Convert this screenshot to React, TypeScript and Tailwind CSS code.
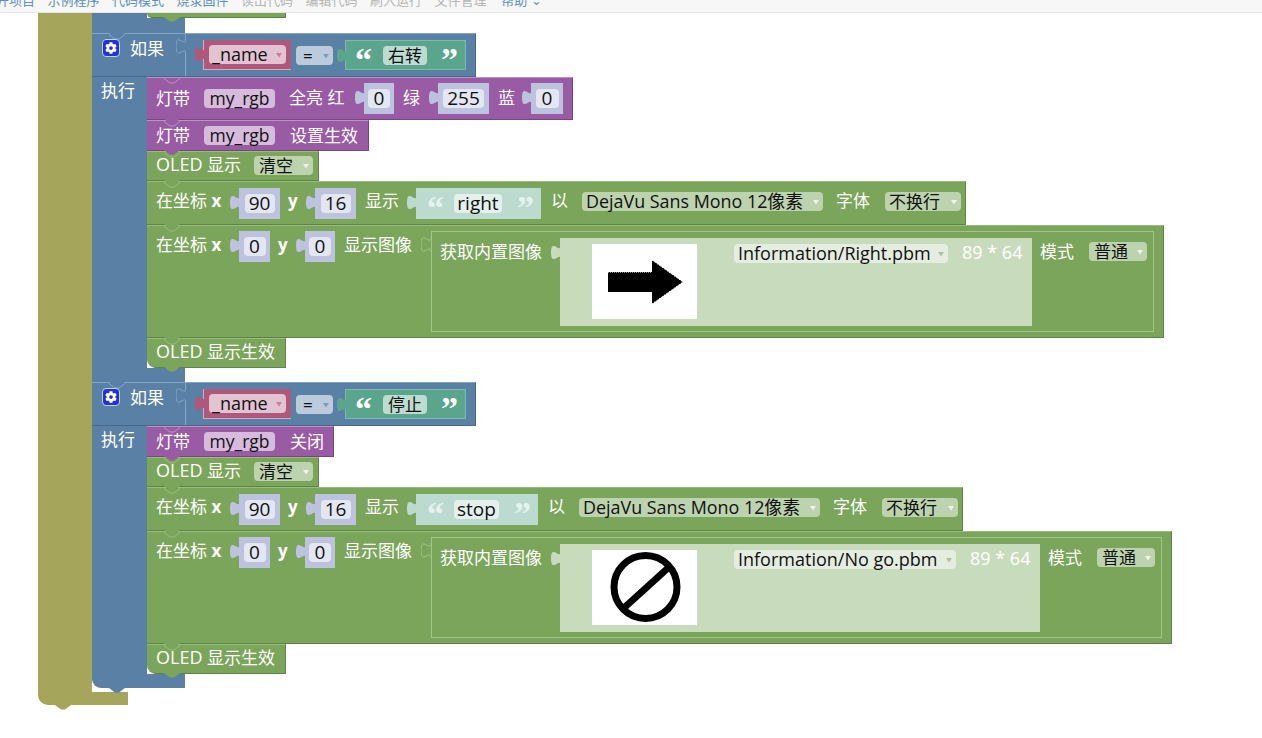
import React from "react";
import { FaCog } from "react-icons/fa";

const T = "shrink-0 whitespace-nowrap text-[17px] leading-[20px] text-white";
const GREEN = "relative flex shrink-0 border-t border-r border-b border-t-[#97bd7c] border-r-[#5f8346] border-b-[#5f8346] bg-[#7aa55b] pl-[9px]";
const PURPLE = "relative flex shrink-0 items-center border-t border-r border-b border-t-[#bd93c6] border-r-[#77467f] border-b-[#77467f] bg-[#9a5ba5] pl-[9px]";
const GP = "bg-[#bdd2ae]";
const PP = "bg-[#d7bbdc]";

function Puzzle({ fill, stroke = "none", className = "-left-[9px] top-[5px]" }: { fill: string; stroke?: string; className?: string }) {
  return (
    <svg className={"absolute " + className} width="10" height="20" viewBox="0 0 10 20">
      <path d="M10 2c0 10-10-8-10 7.500s10-2.500 10 7.500" fill={fill} stroke={stroke} />
    </svg>
  );
}

function Tab({ fill, z = "z-10" }: { fill: string; z?: string }) {
  return (
    <svg className={"absolute left-[17px] -bottom-[5px] " + z} width="16" height="5" viewBox="0 0 16 5">
      <path d="M0 0h16l-6 4.500h-4z" fill={fill} />
    </svg>
  );
}

function Chevron({ stroke }: { stroke: string }) {
  return (
    <svg className="absolute left-[17px] top-0" width="16" height="6" viewBox="0 0 16 6">
      <path d="M0 .5l6 4.500h4l6-4.500" fill="none" stroke={stroke} />
    </svg>
  );
}

function Pill({ className, arrow, children }: { className: string; arrow?: string; children: React.ReactNode }) {
  return (
    <div className={"flex h-[19px] shrink-0 items-center whitespace-nowrap rounded-[4px] leading-[19px] text-[#111] " + (arrow ? "justify-between pr-[4px] " : "justify-center ") + className}>
      <span>{children}</span>
      {arrow && (
        <svg className="mt-[2px] shrink-0" width="6" height="5" viewBox="0 0 6 5">
          <path d="M0 0h6l-3 4.500z" fill={arrow} />
        </svg>
      )}
    </div>
  );
}

function Num({ className, pill, children }: { className: string; pill: string; children: React.ReactNode }) {
  return (
    <div className={"relative flex h-[31px] shrink-0 items-center justify-center bg-[#bdc2de] " + className}>
      <Puzzle fill="#bdc2de" />
      <Pill className={"bg-[#e4e6f2] text-[19px] " + pill}>{children}</Pill>
    </div>
  );
}

function Quote({ className, char }: { className: string; char: string }) {
  return (
    <span className={"h-[20px] shrink-0 overflow-visible whitespace-nowrap font-['Liberation_Serif',serif] text-[34px] font-bold leading-[30px] " + className}>
      {char}
    </span>
  );
}

function Lamp({ className, children }: { className: string; children?: React.ReactNode }) {
  return (
    <div className={PURPLE + " " + className}>
      <Chevron stroke="#bd93c6" />
      <span className={T}>灯带</span>
      <Pill className={"ml-[14px] w-[71px] text-[17.500px] " + PP}>my_rgb</Pill>
      {children}
      <Tab fill="#9a5ba5" />
    </div>
  );
}

function OledWord() {
  return <span className="inline-block w-[51px] text-[18px]">OLED</span>;
}

function OledClear() {
  return (
    <div className={GREEN + " h-[30px] w-[172px] items-center"}>
      <Chevron stroke="#97bd7c" />
      <span className={T + " -mt-[3px]"}><OledWord />显示</span>
      <Pill className={"-mt-[2px] ml-[13px] w-[59px] pl-[5px] text-[17px] " + GP} arrow="#eef4ea">清空</Pill>
      <Tab fill="#7aa55b" />
    </div>
  );
}

function OledDone() {
  return (
    <div className={GREEN + " h-[30px] w-[139px] items-center rounded-bl-[9px]"}>
      <Chevron stroke="#97bd7c" />
      <span className={T + " -mt-[3px]"}><OledWord />显示生效</span>
      <Tab fill="#7aa55b" />
    </div>
  );
}

function Coord() {
  return (
    <>在坐标 <span className="font-bold">x</span></>
  );
}

function ShowText({ word, block, pill, row }: { word: string; block: string; pill: string; row: string }) {
  return (
    <div className={GREEN + " h-[44px] items-center " + row}>
      <Chevron stroke="#97bd7c" />
      <span className={T + " -mt-[4px] w-[66px]"}><Coord /></span>
      <Num className="ml-[17px] w-[41px]" pill="w-[30px]">90</Num>
      <span className={T + " -mt-[4px] ml-[8px] w-[10px] font-bold"}>y</span>
      <Num className="ml-[17px] w-[41px]" pill="w-[30px]">16</Num>
      <span className={T + " -mt-[4px] ml-[9px] w-[34px]"}>显示</span>
      <div className={"relative ml-[17px] flex h-[31px] shrink-0 items-center bg-[#bddad1] pl-[11px] " + block}>
        <Puzzle fill="#bddad1" />
        <Quote className="w-[14px] text-[#e6f2ee]" char="“" />
        <Pill className={"ml-[13px] bg-[#e3f0ec] text-[19px] " + pill}>{word}</Pill>
        <Quote className="ml-[15px] w-[14px] text-[#e6f2ee]" char="”" />
      </div>
      <span className={T + " -mt-[4px] ml-[10px] w-[17px]"}>以</span>
      <Pill className={"-mt-[3px] ml-[14px] w-[241px] pl-[4px] text-[17.900px] " + GP} arrow="#eef4ea">DejaVu Sans Mono 12像素</Pill>
      <span className={T + " -mt-[4px] ml-[13px] w-[35px]"}>字体</span>
      <Pill className={"-mt-[3px] ml-[14px] w-[76px] pl-[4px] text-[17px] " + GP} arrow="#eef4ea">不换行</Pill>
      <Tab fill="#7aa55b" />
    </div>
  );
}

function ArrowPic() {
  return (
    <svg width="105" height="75" viewBox="0 0 105 75">
      <path d="M16 28H60V16L91 38L60 60V48H16Z" fill="#000" />
      <path d="M60 16L91 38L60 60" fill="none" stroke="#fff" strokeWidth="1" strokeDasharray="1.500 1.500" />
      <path d="M16 28.500H60" fill="none" stroke="#999" strokeWidth="1" strokeDasharray="1 1" />
    </svg>
  );
}

function StopPic() {
  return (
    <svg width="105" height="75" viewBox="0 0 105 75">
      <circle cx="53.500" cy="37" r="31.500" fill="none" stroke="#000" strokeWidth="7" />
      <path d="M76 18L33 57" stroke="#000" strokeWidth="7" />
    </svg>
  );
}

function ShowImage({ row, nested, field, pill, name, pic }: { row: string; nested: string; field: string; pill: string; name: string; pic: React.ReactNode }) {
  return (
    <div className={GREEN + " h-[113px] items-start pt-[5px] " + row}>
      <Chevron stroke="#97bd7c" />
      <span className={T + " mt-[4px] w-[66px]"}><Coord /></span>
      <Num className="ml-[17px] w-[31px]" pill="w-[22px]">0</Num>
      <span className={T + " mt-[4px] ml-[8px] w-[10px] font-bold"}>y</span>
      <Num className="ml-[17px] w-[30px]" pill="w-[22px]">0</Num>
      <span className={T + " mt-[4px] ml-[9px] w-[69px]"}>显示图像</span>
      <div className={"relative ml-[18px] flex h-[101px] shrink-0 items-start border border-[#a3c58b] pl-[8px] pt-[6px] " + nested}>
        <Puzzle fill="#7aa55b" stroke="#a3c58b" className="-left-[11px] top-[3px]" />
        <span className={T + " mt-[4px] w-[103px]"}>获取内置图像</span>
        <div className={"relative ml-[17px] flex h-[88px] shrink-0 items-start bg-[#c9dbbd] pt-[6px] " + field}>
          <Puzzle fill="#c9dbbd" className="-left-[9px] top-[5px]" />
          <div className="ml-[32px] h-[75px] w-[105px] shrink-0 bg-white">{pic}</div>
          <Pill className={"ml-[37px] bg-[#e4ede0] pl-[4px] text-[18px] " + pill} arrow="#a8c596">{name}</Pill>
          <span className={T + " ml-[14px] mt-[-2px] w-[59px] text-[18px]"}>89 * 64</span>
        </div>
        <span className={T + " ml-[8px] mt-[4px] w-[34px]"}>模式</span>
        <Pill className={"ml-[15px] mt-[4px] w-[58px] pl-[5px] text-[17px] " + GP} arrow="#eef4ea">普通</Pill>
      </div>
      <Tab fill="#7aa55b" />
    </div>
  );
}

function IfHeader({ word }: { word: string }) {
  return (
    <div className="relative flex h-[44px] w-[384px] shrink-0 border-t border-r border-b border-t-[#86a6c6] border-r-[#47688a] border-b-[#47688a] bg-[#5b80a5]">
      <Chevron stroke="#86a6c6" />
      <div className="relative flex w-[93px] shrink-0 items-start gap-[10px] pl-[10px] pt-[5px]">
        <div className="flex h-[18px] w-[18px] shrink-0 items-center justify-center rounded-[4px] border border-[#c7d2f2] bg-[#2233d6]">
          <FaCog size={12} color="#fff" />
        </div>
        <span className={T + " w-[36px]"}>如果</span>
      </div>
      <div className="relative flex h-full w-[290px] shrink-0 items-center border-l border-[#86a6c6]">
        <Puzzle fill="#5b80a5" stroke="#86a6c6" className="-left-[10px] top-[3px]" />
        <div className="relative ml-[17px] flex h-[30px] w-[88px] shrink-0 items-center justify-center border-l border-b border-l-[#dba8c0] border-b-[#dba8c0] bg-[#b0587b]">
          <Puzzle fill="#b0587b" />
          <Pill className="w-[77px] bg-[#e2c3d2] pl-[3px] text-[18px]" arrow="#c77f9f">_name</Pill>
        </div>
        <Pill className="ml-[5px] w-[37px] bg-[#bccbdb] pl-[7px] text-[17px]" arrow="#7f9dbb">=</Pill>
        <div className="relative ml-[12px] flex h-[30px] w-[121px] shrink-0 items-center border border-[#7cbca6] bg-[#5ba58c] pl-[9px]">
          <Puzzle fill="#5ba58c" />
          <Quote className="w-[15px] text-white" char="“" />
          <Pill className="ml-[13px] w-[44px] bg-[#bcdcd1] text-[17px]">{word}</Pill>
          <Quote className="ml-[14px] w-[14px] text-white" char="”" />
        </div>
      </div>
    </div>
  );
}

function IfBody({ children, label = true }: { children: React.ReactNode; label?: boolean }) {
  return (
    <div className="flex">
      <div className="w-[55px] shrink-0 bg-[#5b80a5] pl-[9px] pt-[2px]">
        {label && <span className={T}>执行</span>}
      </div>
      <div className="flex flex-col">{children}</div>
    </div>
  );
}

function IfFoot({ className }: { className: string }) {
  return (
    <div className={"relative w-[93px] shrink-0 bg-[#5b80a5] " + className}>
      <Tab fill="#5b80a5" />
    </div>
  );
}

const menuBlue = ["开项目", "示例程序", "代码模式", "烧录固件"];
const menuGrey = ["读出代码", "编辑代码", "刷入运行", "文件管理"];

export default function App() {
  return (
    <div className="h-[738px] w-[1262px] overflow-hidden bg-white font-['Open_Sans','Noto_Sans_CJK_SC',sans-serif]">
      <div className="flex h-[13px] items-end gap-[12.500px] overflow-hidden border-b border-[#e5e5e5] bg-[#f7f7f7] pb-[2px] text-[13px] leading-[20px]">
        {menuBlue.map((m, i) => (
          <span key={m} className={(i === 0 ? "-ml-[4px] " : "") + "shrink-0 text-[#5b8fc0]"}>{m}</span>
        ))}
        {menuGrey.map((m) => (
          <span key={m} className="shrink-0 text-[#b5b5b5]">{m}</span>
        ))}
        <span className="ml-[2px] shrink-0 text-[#5b8fc0]">帮助 ⌄</span>
      </div>

      <div className="pl-[38px]">
        <div className="flex">
          <div className="w-[54px] shrink-0 bg-[#a5a55b]" />
          <div className="flex flex-col pb-[4px]">
            <IfBody label={false}>
              <div className={GREEN + " h-[5px] w-[139px] rounded-bl-[6px] border-t-0"}>
                <Tab fill="#7aa55b" />
              </div>
            </IfBody>
            <IfFoot className="h-[15px]" />

            <IfHeader word="右转" />
            <IfBody>
              <Lamp className="h-[43px] w-[426px]">
                <span className={T + " -mt-[1px] ml-[14px] w-[57px]"}>全亮 红</span>
                <Num className="ml-[18px] w-[30px]" pill="w-[22px]">0</Num>
                <span className={T + " -mt-[1px] ml-[9px] w-[18px]"}>绿</span>
                <Num className="ml-[17px] w-[51px]" pill="w-[41px]">255</Num>
                <span className={T + " -mt-[1px] ml-[9px] w-[17px]"}>蓝</span>
                <Num className="ml-[16px] w-[32px]" pill="w-[23px]">0</Num>
              </Lamp>
              <Lamp className="h-[31px] w-[222px]">
                <span className={T + " ml-[15px]"}>设置生效</span>
              </Lamp>
              <OledClear />
              <ShowText word="right" row="w-[819px]" block="w-[125px]" pill="w-[48px]" />
              <ShowImage
                row="w-[1017px]"
                nested="w-[723px]"
                field="w-[472px]"
                pill="w-[214px]"
                name="Information/Right.pbm"
                pic={<ArrowPic />}
              />
              <OledDone />
            </IfBody>
            <IfFoot className="h-[14px]" />

            <IfHeader word="停止" />
            <IfBody>
              <Lamp className="h-[31px] w-[187px]">
                <span className={T + " ml-[15px]"}>关闭</span>
              </Lamp>
              <OledClear />
              <ShowText word="stop" row="w-[816px]" block="w-[122px]" pill="w-[45px]" />
              <ShowImage
                row="w-[1025px]"
                nested="w-[731px]"
                field="w-[480px]"
                pill="w-[222px]"
                name="Information/No go.pbm"
                pic={<StopPic />}
              />
              <OledDone />
            </IfBody>
            <IfFoot className="h-[14px] rounded-bl-[9px]" />
          </div>
        </div>
        <div className="relative h-[13px] w-[90px] rounded-bl-[10px] bg-[#a5a55b]">
          <Tab fill="#a5a55b" />
        </div>
      </div>
    </div>
  );
}
